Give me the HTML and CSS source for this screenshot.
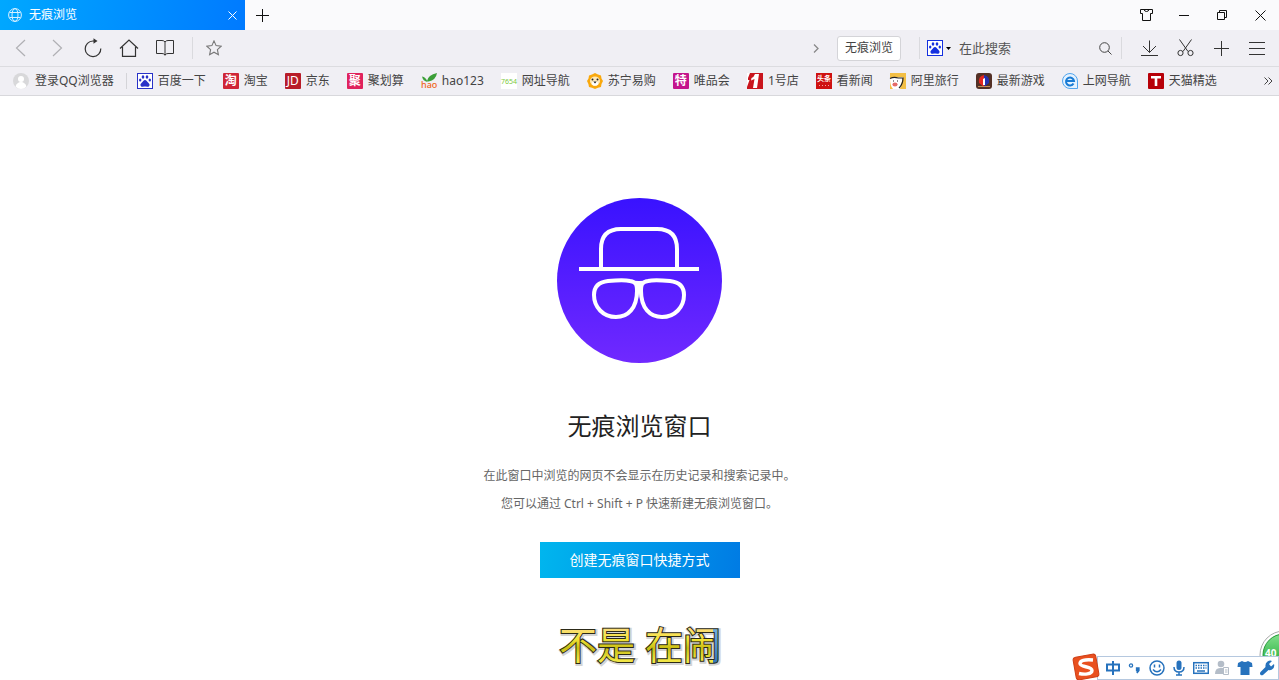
FILE: index.html
```html
<!DOCTYPE html>
<html lang="zh-CN">
<head>
<meta charset="utf-8">
<title>无痕浏览</title>
<link rel="stylesheet" href="styles.css">
</head>
<body>
<svg class="defs" aria-hidden="true">
  <symbol id="paw" viewBox="0 0 16 16">
    <rect x=".5" y=".5" width="15" height="15" fill="#fff" stroke="currentColor"/>
    <g fill="currentColor">
      <ellipse cx="6" cy="4" rx="1.300" ry="1.700"/><ellipse cx="10" cy="4" rx="1.300" ry="1.700"/>
      <ellipse cx="3.200" cy="7" rx="1.200" ry="1.500"/><ellipse cx="12.800" cy="7" rx="1.200" ry="1.500"/>
      <path d="M8 7c1.300 0 1.800 1.300 2.800 2.300s2 1.700 1.700 3-1.500 1.700-2.500 1.400-3-.3-4 0-2.200-.1-2.500-1.400.7-2 1.700-3S6.700 7 8 7z"/>
    </g>
  </symbol>
</svg>
<div class="browser">
  <header class="titlebar">
    <div class="tab">
      <svg width="14" height="14" viewBox="0 0 14 14" fill="none" stroke="#d8f0ff"><circle cx="7" cy="7" r="6.400"/><ellipse cx="7" cy="7" rx="3" ry="6.400"/><path d="M1.500 4.500h11M1.500 9.500h11"/></svg>
      <span class="tab-title">无痕浏览</span>
      <button class="tab-close" aria-label="关闭标签页"><svg width="9" height="9" viewBox="0 0 9 9" stroke="#fff"><path d="M.5.5l8 8M8.500.5l-8 8"/></svg></button>
    </div>
    <button class="new-tab" aria-label="新建标签页"><svg width="13" height="13" viewBox="0 0 13 13" stroke="#111"><path d="M6.500 0v13M0 6.500h13"/></svg></button>
    <div class="window-buttons">
      <button aria-label="皮肤"><svg width="13" height="12" viewBox="0 0 13 12" fill="none" stroke="#111"><path d="M.5.5h3.500q.5 2 2.500 2t2.500-2h3.500v4h-2v7h-8v-7h-2zM4 .5h5"/></svg></button>
      <button aria-label="最小化"><svg width="10" height="10" viewBox="0 0 10 10" stroke="#111"><path d="M0 5.500h10"/></svg></button>
      <button aria-label="还原"><svg width="10" height="10" viewBox="0 0 10 10" fill="none" stroke="#111"><path d="M.5 2.500h7v7h-7zM2.500 2.500v-2h7v7h-2"/></svg></button>
      <button aria-label="关闭"><svg width="11" height="11" viewBox="0 0 11 11" stroke="#111"><path d="M.5.5l10 10M10.500.5l-10 10"/></svg></button>
    </div>
  </header>

  <nav class="toolbar" aria-label="工具栏">
    <button class="tool" aria-label="后退"><svg width="18" height="18" viewBox="0 0 18 18" fill="none" stroke="#b0b0b4" stroke-width="1.200"><path d="M13 1L4.500 9l8.500 8"/></svg></button>
    <button class="tool" aria-label="前进"><svg width="18" height="18" viewBox="0 0 18 18" fill="none" stroke="#b0b0b4" stroke-width="1.200"><path d="M5 1l8.500 8L5 17"/></svg></button>
    <button class="tool" aria-label="刷新"><svg width="18" height="20" viewBox="0 0 18 20" fill="none" stroke="#333" stroke-width="1.200"><path d="M11 3H9A7.800 7.800 0 1 0 16.800 10.500"/><path d="M9.500 .3l4 2.700-4 2.700z" fill="#333" stroke="none"/></svg></button>
    <button class="tool" aria-label="主页"><svg width="20" height="18" viewBox="0 0 20 18" fill="none" stroke="#333" stroke-width="1.200"><path d="M1 9.500L10 1l9 8.500M3.500 8v9.400h13V8"/></svg></button>
    <button class="tool" aria-label="阅读"><svg width="18" height="16" viewBox="0 0 18 16" fill="none" stroke="#333"><path d="M9 2Q8 .5 6 .5H.5v13H6q2 0 3 1.500 1-1.500 3-1.500h5.500V.5H12q-2 0-3 1.500v13.500"/></svg></button>
    <span class="separator"></span>
    <button class="tool" aria-label="收藏"><svg width="16" height="16" viewBox="0 0 16 16" fill="none" stroke="#777" stroke-width="1.100"><path d="M8 .9l2.100 4.700 5.100.6-3.800 3.400 1 5.100L8 12.200l-4.400 2.500 1-5.100L.8 6.200l5.100-.6z"/></svg></button>
    <input class="address" type="text" aria-label="地址栏">
    <button class="expand" aria-label="展开"><svg width="6" height="9" viewBox="0 0 6 9" fill="none" stroke="#888" stroke-width="1.300"><path d="M1 .5l4 4-4 4"/></svg></button>
    <button class="mode">无痕浏览</button>
    <span class="separator"></span>
    <button class="engine" aria-label="搜索引擎"><svg width="16" height="16"><use href="#paw"/></svg><svg width="5" height="3" viewBox="0 0 5 3"><path d="M0 0h5L2.500 3z"/></svg></button>
    <input class="search" type="text" placeholder="在此搜索" aria-label="搜索">
    <button class="go" aria-label="搜索"><svg width="13" height="13" viewBox="0 0 13 13" fill="none" stroke="#444"><circle cx="5.500" cy="5.500" r="4.800"/><path d="M9 9l3.500 3.500"/></svg></button>
    <span class="separator"></span>
    <div class="tools-right">
      <button class="tool" aria-label="下载"><svg width="17" height="17" viewBox="0 0 17 17" fill="none" stroke="#333"><path d="M8.500.5v12M2 6l6.500 6.500L15 6M0 15.500h17"/></svg></button>
      <button class="tool" aria-label="截图"><svg width="17" height="18" viewBox="0 0 17 18" fill="none" stroke="#333"><path d="M2.500.5l8.500 12M14.500.5L6 12.500"/><circle cx="3.500" cy="14" r="2.600"/><circle cx="13.500" cy="14" r="2.600"/></svg></button>
      <button class="tool" aria-label="添加"><svg width="15" height="15" viewBox="0 0 15 15" stroke="#333"><path d="M7.500 0v15M0 7.500h15"/></svg></button>
      <button class="tool" aria-label="菜单"><svg width="16" height="13" viewBox="0 0 16 13" stroke="#333"><path d="M0 .5h16M0 6.500h16M0 12.500h16"/></svg></button>
    </div>
  </nav>

  <nav class="bookmarks" aria-label="书签栏">
    <a class="login" href="#"><svg width="16" height="16" viewBox="0 0 16 16"><circle cx="8" cy="8" r="8" fill="#d8d8da"/><circle cx="8" cy="6" r="3" fill="#fff"/><path d="M2.500 13.500Q4 9 8 9t5.500 4.500Q11 16 8 16t-5.500-2.500z" fill="#fff"/></svg>登录QQ浏览器</a>
    <a href="#"><svg class="paw-dark" width="16" height="16"><use href="#paw"/></svg>百度一下</a>
    <a href="#"><span class="badge taobao">淘</span>淘宝</a>
    <a href="#"><span class="badge jd">JD</span>京东</a>
    <a href="#"><span class="badge ju">聚</span>聚划算</a>
    <a href="#"><svg width="16" height="16" viewBox="0 0 16 16"><path d="M6 8Q7 2 16 0q-1 7-8.500 8.500zM6.500 9Q5 4 1 3.500 2 8 6.500 9z" fill="#3c9f38"/><text class="hao" x="0" y="15">hao</text></svg>hao123</a>
    <a href="#"><svg width="16" height="16" viewBox="0 0 16 16"><rect width="16" height="16" fill="#fff"/><text class="nav-code" x="0" y="11">7654</text></svg>网址导航</a>
    <a href="#"><svg width="16" height="16" viewBox="0 0 16 16"><path d="M8 0l3 1.500 3 1 .5 3L16 8l-1.500 3-.5 3-3 .8L8 16l-3-1.200L2 14l-.6-3L0 8l1.500-2.500L2 2.500l3-1z" fill="#f9a80c"/><ellipse cx="8" cy="8" rx="5" ry="4.500" fill="#ffe9b8"/><circle cx="5.500" cy="6.500" r="1" fill="#222"/><circle cx="10.500" cy="6.500" r="1" fill="#222"/><ellipse cx="8" cy="10.500" rx="3" ry="2.300" fill="#fff"/><path d="M6.300 8.500h3.400L8 10.500z" fill="#222"/></svg>苏宁易购</a>
    <a href="#"><span class="badge vip">特</span>唯品会</a>
    <a href="#"><svg width="16" height="16" viewBox="0 0 16 16"><rect width="16" height="16" fill="#c9151e"/><path d="M0 0h3L1 5v2h1.500L0 14zM8 1h4L10 15H6L7.500 6 4 7.500 4.500 5Q7 4 8 1z" fill="#fff"/></svg>1号店</a>
    <a href="#"><svg width="16" height="16" viewBox="0 0 16 16"><rect width="16" height="16" fill="#cf1111"/><text class="news" x="1" y="8">头条</text><path d="M3 12.500h10" stroke="#f3a0a0" stroke-dasharray="1 2"/></svg>看新闻</a>
    <a href="#"><svg width="16" height="16" viewBox="0 0 16 16"><rect width="16" height="16" fill="#f3bf45"/><path d="M0 5l13-1-3 12H3Q0 13 0 5z" fill="#fff"/><path d="M0 5.500q4-2 8-.5M8 5h5q0 6-4 10" fill="none" stroke="#222" stroke-width="1.200"/><ellipse cx="5" cy="11.500" rx="2.600" ry="2" fill="#e46b68"/><path d="M3 8h1M7 8h1" stroke="#222"/></svg>阿里旅行</a>
    <a href="#"><svg width="16" height="16" viewBox="0 0 16 16"><rect width="16" height="16" rx="3" fill="#533026"/><path d="M8 2Q2 3 3 10l5 4z" fill="#e42720"/><path d="M8 2q6 1 5 8l-5 4z" fill="#2530b0"/><path d="M7 6l2-1v7H7z" fill="#fff"/><path d="M2 13.500h12" stroke="#c78b55"/></svg>最新游戏</a>
    <a href="#"><svg width="16" height="16" viewBox="0 0 16 16"><path d="M8 .5a7.500 7.500 0 1 0 0 15h7.500V8A7.500 7.500 0 0 0 8 .5z" fill="#e4f2ff" stroke="#51a5ee"/><path d="M11.500 10.500A4 4 0 1 1 12 8H5" fill="none" stroke="#187bd4" stroke-width="2"/></svg>上网导航</a>
    <a href="#"><svg width="16" height="16" viewBox="0 0 16 16"><rect width="16" height="16" rx="1" fill="#b70008"/><path d="M3 3h10v2.500H9.300V13H6.700V5.500H3z" fill="#fff"/></svg>天猫精选</a>
    <button class="more" aria-label="更多书签"><svg width="9" height="8" viewBox="0 0 9 8" fill="none" stroke="#444"><path d="M.5.5L4 4 .5 7.500M4.500.5L8 4 4.500 7.500"/></svg></button>
  </nav>

  <main class="page">
    <svg class="hero" width="165" height="165" viewBox="0 0 165 165" fill="none" stroke="#fff" stroke-width="4">
      <defs><linearGradient id="violet" x1="0" y1="0" x2="0" y2="1"><stop stop-color="#3912ff"/><stop offset="1" stop-color="#7029ff"/></linearGradient></defs>
      <circle cx="82.500" cy="82.500" r="82.500" fill="url(#violet)" stroke="none"/>
      <path d="M44 71V51q0-20 20-20h36q20 0 20 20v20"/>
      <path d="M24 71h116" stroke-linecap="square"/>
      <path d="M37 97c0-9 5-13 14-14q16-1.500 22 0c6 1.200 7 3 7 10 0 17-9 26-21 26-13 0-22-10-22-22zM127 97c0-9-5-13-14-14q-16-1.500-22 0c-6 1.200-7 3-7 10 0 17 9 26 21 26 13 0 22-10 22-22z"/>
      <path d="M72 82q10 2 20 0l-8 7-2 11-2-11z" fill="#fff" stroke="none"/>
    </svg>
    <h1>无痕浏览窗口</h1>
    <p>在此窗口中浏览的网页不会显示在历史记录和搜索记录中。</p>
    <p>您可以通过 Ctrl + Shift + P 快速新建无痕浏览窗口。</p>
    <button class="create">创建无痕窗口快捷方式</button>
    <svg class="caption" width="180" height="62" viewBox="0 0 180 62">
      <defs>
        <linearGradient id="gold" x1="0" y1="0" x2="0" y2="1"><stop offset=".2" stop-color="#fbd98a"/><stop offset=".4" stop-color="#f5e63a"/><stop offset=".55" stop-color="#c8bd13"/><stop offset=".75" stop-color="#f0e545"/></linearGradient>
        <linearGradient id="sea" x1="0" y1="0" x2="0" y2="1"><stop stop-color="#8cc7ee"/><stop offset="1" stop-color="#1c5fa8"/></linearGradient>
        <pattern id="fill" width="180" height="62" patternUnits="userSpaceOnUse"><rect width="163" height="62" fill="url(#gold)"/><rect x="163" width="17" height="62" fill="url(#sea)"/></pattern>
      </defs>
      <text class="caption-shade" x="91" y="46" text-anchor="middle" aria-hidden="true">不是 在闹</text>
      <text class="caption-text" x="90" y="45" text-anchor="middle">不是 在闹</text>
    </svg>
  </main>

  <svg class="speed-ball" width="20" height="50" viewBox="0 0 20 50">
    <defs><linearGradient id="green" x1="0" y1="0" x2="0" y2="1"><stop stop-color="#83e08c"/><stop offset=".6" stop-color="#35b54a"/></linearGradient></defs>
    <circle cx="25" cy="25" r="24" fill="#fff" stroke="#aaa"/><circle cx="25" cy="25" r="21" fill="url(#green)" stroke="#269a3a"/>
    <text x="6" y="27">40</text>
  </svg>
  <div class="ime">
    <svg class="ime-logo" width="28" height="28" viewBox="0 0 28 28"><rect x="2.500" y="2.500" width="23" height="23" rx="3" fill="#e9501f" stroke="#cf3e14" transform="rotate(-10 14 14)"/><path d="M21 7Q8 6 8 10.500c0 4 12 2.500 12 7C20 21.500 12 21.500 7 20.500" fill="none" stroke="#fff" stroke-width="3.400"/></svg>
    <button aria-label="中文"><svg width="16" height="16" viewBox="0 0 16 16" fill="none" stroke="#2672bd" stroke-width="2"><path d="M2 4.500h12v6H2zM8 1v14"/></svg></button>
    <button aria-label="标点"><svg width="16" height="16" viewBox="0 0 16 16" fill="none" stroke="#2672bd" stroke-width="1.300"><circle cx="4" cy="5.500" r="1.600"/><path d="M9.500 8h2.500v2.500L10 13l.5-2.500h-1z" fill="#2672bd"/></svg></button>
    <button aria-label="表情"><svg width="16" height="16" viewBox="0 0 16 16" fill="none" stroke="#2672bd" stroke-width="1.500"><circle cx="8" cy="8" r="7"/><path d="M5.500 4.500v3M10.500 4.500v3M4 9.500q4 4.500 8 0"/></svg></button>
    <button aria-label="语音"><svg width="16" height="16" viewBox="0 0 16 16" fill="none" stroke="#2672bd" stroke-width="1.500"><rect x="5.500" y=".5" width="5" height="9.500" rx="2.500" fill="#2672bd" stroke="none"/><path d="M3 7q0 5 5 5t5-5M8 12v3M5 15h6"/></svg></button>
    <button aria-label="键盘"><svg width="16" height="16" viewBox="0 0 16 16" fill="none" stroke="#2672bd" stroke-width="1.500"><rect x=".7" y="2.700" width="14.600" height="10.600"/><path d="M2.500 5.500h11M2.500 8h11" stroke-dasharray="1.500 1"/><path d="M4 11h8"/></svg></button>
    <button aria-label="账户"><svg width="16" height="16" viewBox="0 0 16 16" fill="#b4bdc8"><circle cx="6" cy="4" r="3.300"/><path d="M0 14q0-6 5-6h3v6z"/><path d="M8.500 7.500h5v7h-5z" fill="#fff" stroke="#b4bdc8"/><path d="M10 10h2.500M10 12h2.500" stroke="#b4bdc8"/></svg></button>
    <button aria-label="皮肤"><svg width="16" height="16" viewBox="0 0 16 16" fill="#2672bd"><path d="M5 1q3 2 6 0l4 2 .5 4H12.500v8h-9V7H.5L1 3z"/></svg></button>
    <button aria-label="设置"><svg width="16" height="16" viewBox="0 0 16 16" fill="#2672bd"><path d="M13 1L10 4l2 2.500 3-2.500q1 4-2 5.500-2 1-3.500.5L4 15q-1.500.8-2.500-.3T1.500 12l5-5Q6 3 8.500 1.500T13 1z"/></svg></button>
  </div>
</div>
</body>
</html>
```

FILE: styles.css
```css
* { box-sizing: border-box; }
body {
  margin: 0;
  background: #fff;
  color: #444;
  font: 12px/16px "Noto Sans", "Noto Sans CJK SC", sans-serif;
}
button {
  display: flex;
  align-items: center;
  justify-content: center;
  padding: 0;
  border: 0;
  background: none;
  color: inherit;
  font: inherit;
}
input {
  min-width: 0;
  padding: 0;
  border: 0;
  outline: 0;
  background: none;
  font: inherit;
}
a { color: inherit; text-decoration: none; }
svg { flex: none; }
.defs { position: absolute; width: 0; height: 0; }
.browser { display: flex; flex-direction: column; min-height: 100vh; position: relative; overflow: hidden; }

.titlebar { display: flex; height: 30px; background: #fafafc; }
.tab {
  display: flex;
  align-items: center;
  gap: 7px;
  width: 245px;
  padding-left: 8px;
  background: linear-gradient(100deg, #00a8ff, #007aff);
  color: #fff;
}
.tab-title { flex: 1; }
.tab-close { width: 26px; height: 30px; }
.new-tab { width: 35px; }
.window-buttons { display: flex; margin-left: auto; }
.window-buttons button { width: 38px; }

.toolbar {
  display: flex;
  align-items: center;
  height: 37px;
  padding: 0 4px 0 3px;
  border-bottom: 1px solid #dcdce0;
  background: #f0eff4;
}
.tool { width: 36px; height: 36px; }
.separator { width: 1px; height: 22px; margin: 0 9px; background: #dadade; }
.toolbar .tool + .separator { margin-right: 3px; }
.address { flex: 1; height: 28px; }
.expand { width: 24px; height: 28px; margin-right: 9px; }
.mode {
  height: 25px;
  padding: 0 7px;
  margin-right: 9px;
  border: 1px solid #d4d4d8;
  border-radius: 3px;
  background: #fff;
}
.mode + .separator { margin-right: 7px; }
.engine { gap: 3px; height: 28px; color: #1430e0; }
.search { width: 136px; margin-left: 8px; font-size: 13px; }
.search::placeholder { color: #555; opacity: 1; }
.go { width: 20px; height: 28px; }
.go + .separator { margin-left: 6px; }
.tools-right { display: flex; }

.bookmarks {
  display: flex;
  align-items: center;
  gap: 17px;
  height: 29px;
  padding: 0 6px 0 13px;
  border-bottom: 1px solid #d8d8dc;
  background: #f0eff4;
  white-space: nowrap;
}
.bookmarks a { display: flex; align-items: center; gap: 5px; }
.bookmarks svg { overflow: visible; }
.bookmarks .login { gap: 6px; margin-right: -7px; padding-right: 12px; border-right: 1px solid #d4d4d8; }
.paw-dark { color: #2932c8; }
.badge {
  width: 16px;
  height: 16px;
  border-radius: 1px;
  color: #fff;
  font-size: 12px;
  font-weight: 700;
  line-height: 16px;
  text-align: center;
}
.taobao { background: #cf2636; }
.jd { background: #b81c29; font-weight: 400; }
.ju { background: #e0225c; }
.vip { background: #c4148c; }
.hao { fill: #ee6420; font-size: 9px; font-weight: 500; }
.nav-code { fill: #7bc940; font-size: 7px; }
.news { fill: #fff; font-size: 7px; font-weight: 700; }
.more { width: 10px; height: 28px; margin-left: auto; }

.page { display: flex; flex-direction: column; align-items: center; padding-top: 102px; }
h1 { margin: 45px 0 18px; color: #222; font-size: 24px; font-weight: 400; line-height: 36px; }
p { margin: 0; color: #666; line-height: 28px; }
.create {
  width: 200px;
  height: 36px;
  margin-top: 24px;
  background: linear-gradient(100deg, #00b6ee, #007be4);
  color: #fff;
  font-size: 14px;
}
.caption { margin-top: 36px; margin-bottom: -6px; }
.caption text { font-size: 38px; font-weight: 400; }
.caption-shade { fill: #999; stroke: #aaa; stroke-width: 4px; opacity: .5; }
.caption-text { fill: url(#fill); stroke: #2c2a18; stroke-width: 2px; paint-order: stroke; }

.speed-ball { position: absolute; right: 0; bottom: 0; }
.speed-ball text { fill: #fff; font-size: 10px; font-weight: 700; }
.ime {
  position: absolute;
  right: 0;
  bottom: 0;
  display: flex;
  align-items: center;
  gap: 6px;
  height: 24px;
  padding-left: 7px;
  padding-right: 3px;
  border: 1px solid #b5c8df;
  background: #fff;
}
.ime-logo { position: absolute; right: 100%; margin-right: -2px; bottom: -2px; }
```
